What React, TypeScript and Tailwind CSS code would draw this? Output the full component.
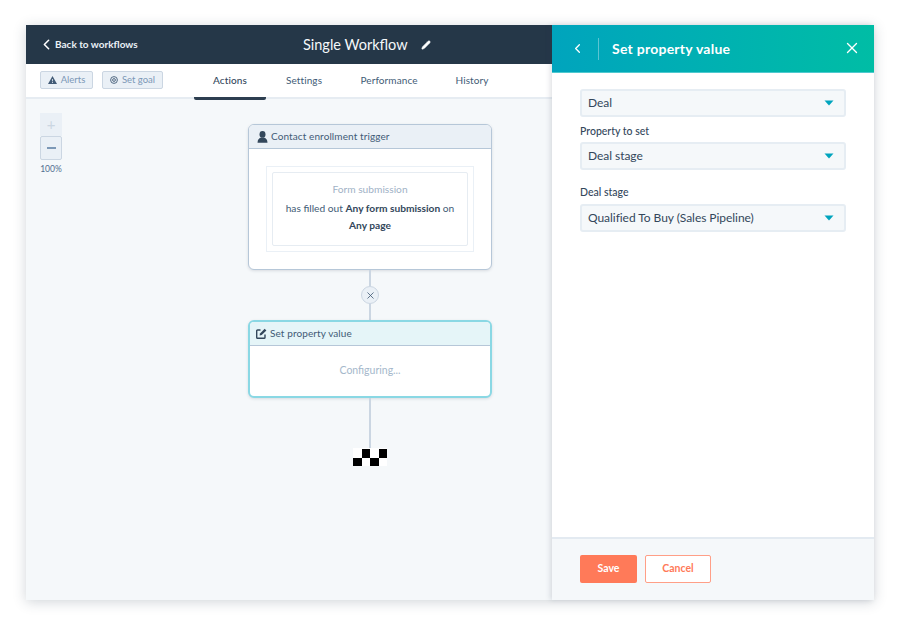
import React, {FC} from 'react'
import {ChevronLeft, Pencil, X} from 'lucide-react'

const font = {fontFamily: 'Lato, "Open Sans", sans-serif'}

const Triangle: FC = () => (
  <svg width="10" height="6" viewBox="0 0 10 6">
    <path d="M0.5 0.5h9L5 5.5z" fill="#00a4bd"/>
  </svg>
)

const PersonIcon: FC = () => (
  <svg width="11" height="12" viewBox="0 0 11 12">
    <ellipse cx="5.5" cy="3.4" rx="3" ry="3.4" fill="#33475b"/>
    <path d="M0.5 11.8c0-3 1.6-4.6 3.2-5h3.6c1.6.4 3.2 2 3.2 5z" fill="#33475b"/>
  </svg>
)

const EditBoxIcon: FC = () => (
  <svg width="11" height="11" viewBox="0 0 11 11">
    <path d="M4.5 2H1.6C1 2 .7 2.4.7 2.9v6.5c0 .5.4.9.9.9h6.5c.5 0 .9-.4.9-.9V6.5" fill="none" stroke="#33475b" strokeWidth="1.4"/>
    <path d="M3.6 7.5 4 5.4 8.7.7l1.7 1.7L5.7 7.1z" fill="#33475b"/>
  </svg>
)

const Select: FC<{value: string}> = ({value}) => (
  <div className="h-7 rounded-[3px] border-2 border-[#e6edf3] bg-[#f5f8fa] flex items-center justify-between pl-[6px] pr-[10px] text-[12px] text-[#33475b]">
    <span className="tracking-[-0.05px]">{value}</span>
    <Triangle/>
  </div>
)

const Finish: FC = () => (
  <div className="w-[34px] h-[18px] bg-white grid grid-cols-4 grid-rows-2 pt-px">
    <div/>
    <div className="bg-black"/>
    <div/>
    <div className="bg-black"/>
    <div className="bg-black"/>
    <div/>
    <div className="bg-black"/>
    <div/>
  </div>
)

export default function App() {
  return (
    <div className="w-[900px] h-[625px] bg-white pt-[25px] pl-[26px]" style={font}>
      <div className="w-[848px] h-[575px] flex shadow-[0_2px_12px_rgba(45,62,80,0.22)]">
        <div className="w-[526px] flex flex-col bg-[#f5f8fa]">
          <div className="h-[39px] bg-[#253748] flex items-center text-white shrink-0">
            <div className="w-[150px] flex items-center pl-[14px] text-[10px] font-bold">
              <ChevronLeft size={17} strokeWidth={2.2} className="-ml-[2px]"/>
              <span className="text-[#eaf0f6] pb-[1px]">Back to workflows</span>
            </div>
            <div className="ml-[127px] text-[14.5px] text-[#f5f8fa]">Single Workflow</div>
            <Pencil size={10} fill="#fff" strokeWidth={1.5} className="ml-[13px]"/>
          </div>
          <div className="h-[35px] bg-white border-b-2 border-[#e6ecf2] flex shrink-0 relative">
            <div className="flex items-center gap-[9px] pl-[14px] pb-[1px] text-[9.5px] text-[#7c98b6]">
              <div className="h-[18px] w-[53px] flex items-center justify-center gap-[4px] rounded-[2px] border border-[#cbd6e2] bg-[#eaf0f6]">
                <svg width="9" height="8" viewBox="0 0 9 8">
                  <path d="M4.5 0 9 8H0z" fill="#425b76"/>
                  <path d="M4.5 3v2.4M4.5 6v1" stroke="#eaf0f6" strokeWidth="0.8"/>
                </svg>
                <span>Alerts</span>
              </div>
              <div className="h-[18px] w-[61px] flex items-center justify-center gap-[4px] rounded-[2px] border border-[#cbd6e2] bg-[#eaf0f6]">
                <svg width="8" height="8" viewBox="0 0 8 8" fill="none" stroke="#425b76">
                  <circle cx="4" cy="4" r="3.4" strokeWidth="0.9"/>
                  <circle cx="4" cy="4" r="1.4" strokeWidth="0.9"/>
                </svg>
                <span>Set goal</span>
              </div>
            </div>
            <div className="flex ml-[31px] text-[10px] text-[#425b76] tracking-[0.1px]">
              <div className="w-[72px] h-[36px] flex items-center justify-center pb-[1px] text-[#33475b] font-medium border-b-[3px] border-[#2d3e50] rounded-b-[2px]">Actions</div>
              <div className="w-[76px] h-[33px] flex items-center justify-center">Settings</div>
              <div className="w-[94px] h-[33px] flex items-center justify-center">Performance</div>
              <div className="w-[72px] h-[33px] flex items-center justify-center">History</div>
            </div>
          </div>
          <div className="flex-1 flex pl-[14px] pt-[14px]">
            <div className="w-[22px] flex flex-col items-center">
              <div className="w-[22px] h-[23px] bg-[#eaf0f6] flex items-center justify-center text-[#cbd6e2] text-[15px]">+</div>
              <div className="w-[22px] h-[24px] bg-[#eaf0f6] border border-[#cbd6e2] rounded-[2px] flex items-center justify-center">
                <div className="w-[9px] h-[2px] bg-[#7c98b6]"/>
              </div>
              <div className="mt-[3px] text-[8.5px] text-[#516f90] whitespace-nowrap">100%</div>
            </div>
            <div className="ml-[186px] pt-[11px] w-[244px] flex flex-col items-center">
              <div className="w-full h-[146px] rounded-[6px] border border-[#b6c7d8] bg-white shadow-[0_1px_3px_rgba(45,62,80,0.15)] overflow-hidden shrink-0">
                <div className="h-[24px] bg-[#eaf0f6] border-b border-[#b6c7d8] flex items-center gap-[3px] pl-[8px] text-[10px] text-[#425b76] tracking-[0.1px]">
                  <PersonIcon/>
                  <span className="pb-[1px]">Contact enrollment trigger</span>
                </div>
                <div className="mt-[17px] mx-[17px] h-[86px] border border-[#eaf0f6] p-[5px]">
                  <div className="h-full rounded-[2px] border border-[#e6ecf2] flex flex-col items-center pt-[8px] text-[10.2px] leading-[17px] text-[#425b76]">
                    <div className="text-[#9fb2c6] mb-[2px]">Form submission</div>
                    <div>has filled out <b className="font-bold text-[#33475b]">Any form submission</b> on</div>
                    <b className="font-bold text-[#33475b]">Any page</b>
                  </div>
                </div>
              </div>
              <div className="w-[2px] h-[16px] bg-[#cbd6e2]"/>
              <div className="w-[18px] h-[18px] rounded-full bg-[#eaf0f6] border border-[#cbd6e2] flex items-center justify-center">
                <X size={11} strokeWidth={1.8} color="#425b76"/>
              </div>
              <div className="w-[2px] h-[16px] bg-[#cbd6e2]"/>
              <div className="w-full h-[78px] rounded-[6px] border-2 border-[#8ad8e4] bg-white shadow-[0_1px_3px_rgba(45,62,80,0.15)] overflow-hidden shrink-0">
                <div className="h-[24px] bg-[#e5f5f8] border-b border-[#b6c7d8] flex items-center gap-[3px] pl-[6px] text-[10px] text-[#425b76] tracking-[0.1px]">
                  <EditBoxIcon/>
                  <span className="pb-[1px]">Set property value</span>
                </div>
                <div className="h-[50px] flex items-center justify-center text-[10.5px] text-[#a5b8cb]">Configuring...</div>
              </div>
              <div className="w-[2px] h-[50px] bg-[#cbd6e2]"/>
              <Finish/>
            </div>
          </div>
        </div>
        <div className="w-[322px] flex flex-col bg-white relative shadow-[-2px_0_5px_rgba(45,62,80,0.15)]">
          <div className="h-[48px] bg-gradient-to-r from-[#00a4bd] to-[#00bda5] flex items-center text-white border-b border-[#4fc9cf] shrink-0">
            <ChevronLeft size={15} strokeWidth={2} className="ml-[18px]"/>
            <div className="ml-[13px] w-px h-[22px] bg-[#5cc4d2]"/>
            <div className="ml-[13px] text-[14px] font-bold tracking-[0.25px]">Set property value</div>
            <X size={18} strokeWidth={1.8} className="ml-auto mr-[13px] mb-[1px]"/>
          </div>
          <div className="flex-1 px-[28px] pt-[16px]">
            <Select value="Deal"/>
            <div className="mt-[7px] h-[18px] text-[10.5px] font-medium text-[#33475b] leading-[14px]">Property to set</div>
            <Select value="Deal stage"/>
            <div className="mt-[15px] h-[19px] text-[10.5px] font-medium text-[#33475b] leading-[14px]">Deal stage</div>
            <Select value="Qualified To Buy (Sales Pipeline)"/>
          </div>
          <div className="h-[63px] bg-[#f5f8fa] border-t-2 border-[#e3eaf1] flex items-start gap-[8px] pl-[28px] pt-[16px] text-[10.5px] font-bold shrink-0">
            <div className="w-[57px] h-[28px] rounded-[2px] bg-[#ff7a59] text-white flex items-center justify-center">Save</div>
            <div className="w-[66px] h-[28px] rounded-[2px] bg-white border border-[#ff9f87] text-[#ff7a59] flex items-center justify-center">Cancel</div>
          </div>
        </div>
      </div>
    </div>
  )
}
